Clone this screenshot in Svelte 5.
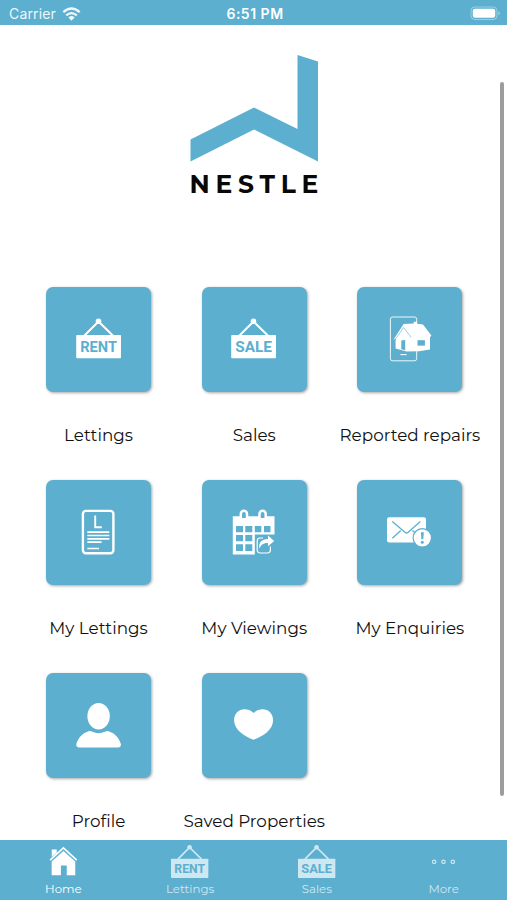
<script>
	let active = $state("Home");

	const tiles = [
		{ icon: "rent", label: "Lettings" },
		{ icon: "sale", label: "Sales" },
		{ icon: "repairs", label: "Reported repairs" },
		{ icon: "document", label: "My Lettings" },
		{ icon: "calendar", label: "My Viewings" },
		{ icon: "mail", label: "My Enquiries" },
		{ icon: "profile", label: "Profile" },
		{ icon: "heart", label: "Saved Properties" }
	];

	const tabs = [
		{ icon: "home", label: "Home" },
		{ icon: "rent", label: "Lettings" },
		{ icon: "sale", label: "Sales" },
		{ icon: "more", label: "More" }
	];
</script>

{#snippet sign(word)}
	<path d="M9.5 20.5 23.5 6.5 37.8 20.5" fill="none" stroke="#fff" stroke-width="2" />
	<circle cx="23.5" cy="6.3" r="2.8" fill="#fff" />
	<rect x="1.2" y="20" width="44.8" height="23.2" rx="0.8" fill="#fff" />
	<text class="sign-text" x="5.2" y="36.9" textLength="36.8" lengthAdjust="spacingAndGlyphs">{word}</text>
{/snippet}

{#snippet icon(name)}
	<svg class="icon" viewBox="0 0 48 48">
		{#if name == "rent"}
			{@render sign("RENT")}
		{:else if name == "sale"}
			{@render sign("SALE")}
		{:else if name == "repairs"}
			<rect x="4.4" y="2" width="26.3" height="43.8" rx="2.2" fill="none" stroke="#fff" stroke-width="0.9" />
			<path d="M14.5 39.6h6" stroke="#fff" stroke-width="1.1" />
			<path d="M7.3 25 17.6 9.1 27.8 8.6V6.8h3.2v2L37 9.6 45.4 20.5 44 22.2V34.5L33 36.3 20.5 36.5 9.6 33.6V23.5Z" fill="#fff" />
			<path d="M8.8 25 17.6 12.6 25.2 22.3" fill="none" stroke="#5cafcf" stroke-width="0.6" />
			<path d="M15.3 25.6 19.2 25V35.3L15.3 34.2Z" fill="#5cafcf" />
			<rect x="31.5" y="25.2" width="7.4" height="5.4" fill="#5cafcf" />
		{:else if name == "document"}
			<rect x="7.9" y="2.9" width="30.5" height="42.4" rx="3" fill="none" stroke="#fff" stroke-width="2.4" />
			<path d="M20.2 7.5V19.2H26.8" fill="none" stroke="#fff" stroke-width="1.9" />
			<path d="M12.3 24.2H34.3M12.3 27.5H34.3M12.3 30.8H34.3M12.3 34.1H26.5M12.3 40.5H24" stroke="#fff" stroke-width="1.7" />
		{:else if name == "calendar"}
			<path d="M3.8 8.2H44.5V26.4H24.8V46.5H2.8V8.2Z" fill="#fff" />
			<path d="M10.8 10V5.8a3.1 3.1 0 0 1 6.2 0V10M29.5 10V5.8a3.1 3.1 0 0 1 6.2 0V10" fill="#5cafcf" stroke="#fff" stroke-width="2.5" />
			<path d="M6 18h7v6.3H6zM15.3 18h7v6.3h-7zM24.8 18h6.5v6.3h-6.5zM34 18h6.5v6.3H34zM6 27h7v6.3H6zM15.3 27h7v6.3h-7zM6 36.2h7v6.8H6zM15.3 36.2h7v6.8h-7z" fill="#5cafcf" />
			<path d="M33 30H30a2.8 2.8 0 0 0-2.8 2.8v9.4a2.8 2.8 0 0 0 2.8 2.8h7.6a2.8 2.8 0 0 0 2.8-2.8V38.5" fill="none" stroke="#fff" stroke-width="1.2" />
			<path d="M29.3 40.8C28.5 34.2 31.7 31.2 38 31V27.5L44.2 33 38 38.2V35C33.6 35 31.1 36.5 29.3 40.8Z" fill="#fff" />
		{:else if name == "mail"}
			<rect x="1" y="9.2" width="39" height="25.3" rx="2.2" fill="#fff" />
			<path d="M6.3 13.5 19 24.3Q20.6 25.7 22.2 24.3L34.3 13.5M6.3 30.3 14.8 22.6M26.4 22.4 30 25.6" fill="none" stroke="#5cafcf" stroke-width="1.3" />
			<circle cx="36.3" cy="29.8" r="9.2" fill="#fff" stroke="#5cafcf" stroke-width="1.2" />
			<path d="M34.9 24.2h2.9l-.5 7h-1.9z" fill="#5cafcf" />
			<circle cx="36.3" cy="34.3" r="1.5" fill="#5cafcf" />
		{:else if name == "profile"}
			<ellipse cx="23.6" cy="15.2" rx="11.2" ry="13.3" fill="#fff" />
			<path d="M13.7 30.2C16 29.6 18.5 32.3 23.6 32.3S31.2 29.6 33.5 30.2C40.5 32.5 44 37 45.8 42.7 46.4 44.8 45 46.5 42.8 46.5H4.4C2.2 46.5.8 44.8 1.4 42.7 3.2 37 6.7 32.5 13.7 30.2Z" fill="#fff" />
		{:else if name == "heart"}
			<path d="M23.6 12.1C20.8 9.2 17.8 8.2 14.6 8.2 8.6 8.2 4.1 12.7 4.1 19.2 4.1 29.3 15 35.4 23.6 38.7 32.2 35.4 43.1 29.3 43.1 19.2 43.1 12.7 38.6 8.2 32.6 8.2 29.4 8.2 26.4 9.2 23.6 12.1Z" fill="#fff" />
		{:else if name == "home"}
			<path d="M8.5 21.8 24.5 7.2 40.5 21.8" fill="none" stroke="#fff" stroke-width="2" />
			<path d="M10.5 9h6v3.8L10.5 18z" fill="#fff" />
			<path d="M24.5 10.7 38.7 23.5V39.8H28.5V28.3H21.5V39.8H10.4V23.5Z" fill="#fff" />
		{:else}
			<g fill="none" stroke="#fff" stroke-width="1.4">
				<circle cx="12.2" cy="23.8" r="2.1" />
				<circle cx="23.4" cy="23.8" r="2.1" />
				<circle cx="34.6" cy="23.8" r="2.1" />
			</g>
		{/if}
	</svg>
{/snippet}

<div class="app">
	<header class="status">
		<div class="carrier">
			<span>Carrier</span>
			<svg width="19" height="14" viewBox="0 0 18 14">
				<g fill="none" stroke="#fff" stroke-width="2.3">
					<path d="M.8 5.1Q9-2.2 17.2 5.1" />
					<path d="M3.7 8.4Q9 3.9 14.3 8.4" />
				</g>
				<path d="M5.9 10.4Q9 7.8 12.1 10.4L9 13.7Z" fill="#fff" />
			</svg>
		</div>
		<div class="time">6:51 PM</div>
		<svg class="battery" width="31" height="15" viewBox="0 0 31 15">
			<rect x="1" y="1" width="26" height="12.5" rx="3.8" fill="none" stroke="#fff" stroke-opacity="0.4" />
			<rect x="2.8" y="2.8" width="22.4" height="8.9" rx="2" fill="#fff" />
			<path d="M28.5 5.3Q31 7.2 28.5 9.2Z" fill="#fff" fill-opacity="0.5" />
		</svg>
	</header>

	<main>
		<svg class="logo" width="140" height="150" viewBox="0 0 140 150">
			<path d="M6.5 87.5 70 55.5 113.5 77V3L134 9.5V109.5L70 77.5 6.5 109.5Z" fill="#5cafcf" />
			<text class="logo-text" x="5.4" y="141" textLength="129">NESTLE</text>
		</svg>

		<div class="grid">
			{#each tiles as tile}
				<div class="item">
					<button class="tile" aria-label={tile.label}>{@render icon(tile.icon)}</button>
					<span class="label">{tile.label}</span>
				</div>
			{/each}
		</div>
		<div class="scrollbar"></div>
	</main>

	<nav>
		{#each tabs as tab}
			<button class="tab" class:active={active == tab.label} onclick={() => active = tab.label}>
				{@render icon(tab.icon)}
				<span>{tab.label}</span>
			</button>
		{/each}
	</nav>
</div>

<style>
	:global(body) {
		background: #fff;
	}
	.app {
		height: 900px;
		display: flex;
		flex-direction: column;
		overflow: hidden;
		font-family: Montserrat, Inter, sans-serif;
	}
	button {
		border: 0;
		padding: 0;
		font: inherit;
	}
	.status {
		height: 25px;
		flex: none;
		display: grid;
		grid-template-columns: 1fr auto 1fr;
		align-items: center;
		padding: 2px 6px 0 9px;
		box-sizing: border-box;
		background: #5cafcf;
		color: #fff;
		font-family: Inter, sans-serif;
		font-size: 14px;
	}
	.carrier {
		display: flex;
		align-items: center;
		gap: 6px;
		letter-spacing: 0.15px;
		opacity: 0.9;
	}
	.time {
		font-weight: 600;
		font-size: 14px;
		letter-spacing: 0.5px;
	}
	.battery {
		justify-self: end;
	}
	main {
		position: relative;
		flex: 1;
		min-height: 0;
	}
	.logo {
		display: block;
		margin: 27px 0 0 184px;
	}
	.logo-text {
		font-size: 25px;
		font-weight: 700;
		fill: #080808;
	}
	.grid {
		display: grid;
		grid-template-columns: repeat(3, 155.7px);
		grid-auto-rows: 193px;
		margin: 85px 0 0 20.7px;
	}
	.item {
		display: flex;
		flex-direction: column;
		align-items: center;
	}
	.tile {
		width: 105px;
		height: 104.5px;
		flex: none;
		display: flex;
		align-items: center;
		justify-content: center;
		background: #5cafcf;
		border-radius: 7px;
		box-shadow: 1px 1px 3px rgba(0, 0, 0, 0.35);
	}
	.tile .icon {
		width: 48px;
		height: 48px;
	}
	.sign-text {
		font-family: Roboto, sans-serif;
		font-size: 14.8px;
		font-weight: 700;
		fill: #5cafcf;
	}
	.label {
		margin-top: 32.5px;
		font-size: 16.8px;
		line-height: 22px;
		white-space: nowrap;
		color: #111;
	}
	.scrollbar {
		position: absolute;
		top: 57px;
		right: 3.5px;
		width: 4px;
		height: 714px;
		border-radius: 2px;
		background: #9d9d9d;
	}
	nav {
		height: 60.5px;
		flex: none;
		display: grid;
		grid-template-columns: repeat(4, 1fr);
		background: #5cafcf;
	}
	.tab {
		display: flex;
		flex-direction: column;
		align-items: center;
		padding-top: 2.5px;
		background: none;
		color: #fff;
		opacity: 0.7;
	}
	.tab.active {
		opacity: 1;
	}
	.tab .icon {
		width: 40px;
		height: 40px;
	}
	.tab span {
		font-size: 11.8px;
		line-height: 14px;
	}
</style>
